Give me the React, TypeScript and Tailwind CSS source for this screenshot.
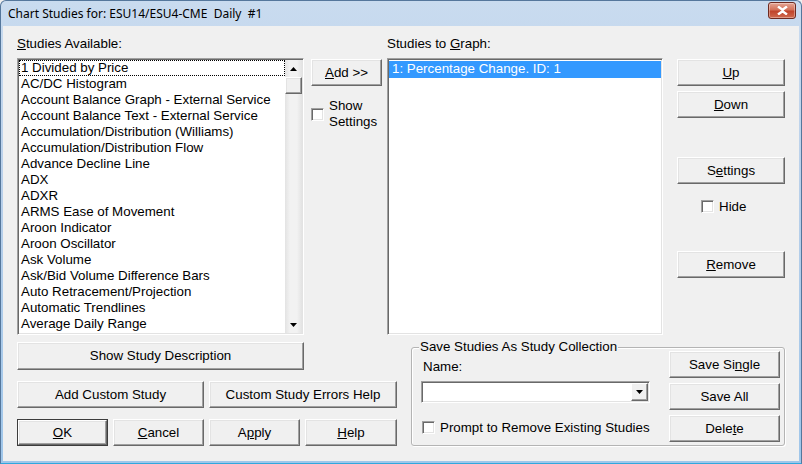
import type { ReactNode } from 'react'

const STUDIES = [
  '1 Divided by Price',
  'AC/DC Histogram',
  'Account Balance Graph - External Service',
  'Account Balance Text - External Service',
  'Accumulation/Distribution (Williams)',
  'Accumulation/Distribution Flow',
  'Advance Decline Line',
  'ADX',
  'ADXR',
  'ARMS Ease of Movement',
  'Aroon Indicator',
  'Aroon Oscillator',
  'Ask Volume',
  'Ask/Bid Volume Difference Bars',
  'Auto Retracement/Projection',
  'Automatic Trendlines',
  'Average Daily Range',
  'Average True Range',
]

/** classic raised 3D push button */
function Btn({
  children,
  className = '',
  isDefault = false,
}: {
  children: ReactNode
  className?: string
  isDefault?: boolean
}) {
  if (isDefault) {
    return (
      <div className={`border border-[#3c3c3c] ${className}`}>
        <Btn className="h-full w-full">{children}</Btn>
      </div>
    )
  }
  return (
    <button
      type="button"
      className={`flex shrink-0 items-center justify-center border border-t-white border-l-white border-r-[#696969] border-b-[#696969] bg-[#f0f0f0] text-[13.33px] leading-4 text-black shadow-[inset_-1px_-1px_0_#a0a0a0,inset_1px_1px_0_#e3e3e3] ${className}`}
    >
      {children}
    </button>
  )
}

function CheckBox() {
  return (
    <span className="block h-[13px] w-[13px] shrink-0 border border-t-[#a0a0a0] border-l-[#a0a0a0] border-r-white border-b-white bg-white shadow-[inset_1px_1px_0_#696969,inset_-1px_-1px_0_#e3e3e3]" />
  )
}

function Arrow({ down = false }: { down?: boolean }) {
  return (
    <svg width="7" height="4" viewBox="0 0 7 4" className="block">
      {down ? <path d="M0 0h7L3.5 4z" fill="#000" /> : <path d="M0 4h7L3.5 0z" fill="#000" />}
    </svg>
  )
}

function ScrollBar() {
  return (
    <div className="flex w-[17px] shrink-0 flex-col bg-[linear-gradient(to_right,#e3e3e3,#f2f2f2_30%,#f2f2f2_70%,#e3e3e3)]">
      <div className="flex h-[17px] items-center justify-center">
        <Arrow />
      </div>
      <div className="h-[17px] border border-t-white border-l-white border-r-[#696969] border-b-[#696969] bg-[#f0f0f0] shadow-[inset_-1px_-1px_0_#a0a0a0,inset_1px_1px_0_#e3e3e3]" />
      <div className="flex-1" />
      <div className="flex h-[17px] items-center justify-center">
        <Arrow down />
      </div>
    </div>
  )
}

export default function App() {
  return (
    <div className="h-[464px] w-[802px] overflow-hidden bg-[#f0f0f0] font-['Liberation_Sans',Arial,sans-serif] text-[13.33px] text-black">
      <div className="flex h-full flex-col rounded-t-[6px] border border-[#55779c] border-b-[#2fa8de] bg-[linear-gradient(to_bottom,#c9dbef,#b9d0ea_40%,#9fc6ea_100%)]">
        {/* title bar */}
        <div className="flex h-[25px] shrink-0 items-center pr-[5px] pl-[7px]">
          <span className="flex-1 whitespace-pre font-['Segoe_UI','Noto_Sans',sans-serif] text-[12px] text-black">
            Chart Studies for: ESU14/ESU4-CME  Daily  #1
          </span>
          <div className="mt-[-6px] flex h-[17px] w-[28px] items-center justify-center rounded-[3px] border border-[#6e2a20] bg-[linear-gradient(to_bottom,#e5a695,#d37159_45%,#c0442b_55%,#d06a4e)] shadow-[inset_0_0_0_1px_rgba(255,255,255,0.35)]">
            <svg width="11" height="9" viewBox="0 0 11 9">
              <path d="M1 0.5l4.5 3.2 4.5-3.2M1 8.5l4.5-3.2 4.5 3.2" stroke="#fff" strokeWidth="2.4" fill="none" />
            </svg>
          </div>
        </div>

        {/* client area */}
        <div className="mx-[2px] mb-[2px] flex flex-1 flex-col bg-[#f0f0f0]">
          <div className="flex pt-[10px] pl-[14px]">
            {/* studies available */}
            <div className="flex w-[287px] flex-col">
              <div className="h-[22px] leading-4">
                <u>S</u>tudies Available:
              </div>
              <div className="flex h-[277px] border border-t-[#a0a0a0] border-l-[#a0a0a0] border-r-white border-b-white bg-white p-px shadow-[inset_1px_1px_0_#696969,inset_-1px_-1px_0_#e3e3e3]">
                <div className="flex-1 overflow-hidden">
                  {STUDIES.map((s, i) => (
                    <div
                      key={s}
                      className={`h-4 truncate pl-[2px] leading-4 ${i === 0 ? 'outline outline-1 -outline-offset-1 outline-dotted outline-black' : ''}`}
                    >
                      {s}
                    </div>
                  ))}
                </div>
                <ScrollBar />
              </div>
            </div>

            {/* add column */}
            <div className="ml-[7px] flex w-[71px] flex-col pt-[23px]">
              <Btn className="h-[27px] w-[71px]">
                <span>
                  <u>A</u>dd &gt;&gt;
                </span>
              </Btn>
              <div className="mt-[12px] flex items-center gap-[5px]">
                <CheckBox />
                <div className="leading-4">
                  Show
                  <br />
                  Settings
                </div>
              </div>
            </div>

            {/* studies to graph */}
            <div className="ml-[5px] flex w-[276px] flex-col">
              <div className="h-[22px] leading-4">
                Studies to <u>G</u>raph:
              </div>
              <div className="h-[277px] border border-t-[#a0a0a0] border-l-[#a0a0a0] border-r-white border-b-white bg-white p-px shadow-[inset_1px_1px_0_#696969,inset_-1px_-1px_0_#e3e3e3]">
                <div className="mt-px h-[17px] bg-[#3399ff] pl-[3px] leading-4 text-white">1: Percentage Change. ID: 1</div>
              </div>
            </div>

            {/* right buttons */}
            <div className="ml-[14px] flex w-[108px] flex-col pt-[23px]">
              <Btn className="h-[27px] w-full">
                <span>
                  <u>U</u>p
                </span>
              </Btn>
              <Btn className="mt-[5px] h-[27px] w-full">
                <span>
                  <u>D</u>own
                </span>
              </Btn>
              <Btn className="mt-[39px] h-[27px] w-full">
                <span>
                  S<u>e</u>ttings
                </span>
              </Btn>
              <div className="mt-[16px] ml-[24px] flex h-[13px] items-center gap-[5px]">
                <CheckBox />
                <span className="leading-4">Hide</span>
              </div>
              <Btn className="mt-[38px] h-[27px] w-full">
                <span>
                  <u>R</u>emove
                </span>
              </Btn>
            </div>
          </div>

          {/* bottom section */}
          <div className="mt-[7px] flex pl-[14px]">
            <div className="flex w-[380px] flex-col">
              <Btn className="h-[28px] w-[287px]">Show Study Description</Btn>
              <div className="mt-[11px] flex gap-[5px]">
                <Btn className="h-[27px] w-[187px]">Add Custom Study</Btn>
                <Btn className="h-[27px] w-[188px]">Custom Study Errors Help</Btn>
              </div>
              <div className="mt-[11px] flex gap-[5px]">
                <Btn isDefault className="h-[27px] w-[91px]">
                  <span>
                    <u>O</u>K
                  </span>
                </Btn>
                <Btn className="h-[27px] w-[91px]">
                  <span>
                    <u>C</u>ancel
                  </span>
                </Btn>
                <Btn className="h-[27px] w-[91px]">
                  <span>
                    A<u>p</u>ply
                  </span>
                </Btn>
                <Btn className="h-[27px] w-[92px]">
                  <span>
                    <u>H</u>elp
                  </span>
                </Btn>
              </div>
            </div>

            {/* group box */}
            <div className="relative mt-[5px] ml-[14px] flex h-[99px] w-[374px] rounded-[3px] border border-[#b4b4b4] shadow-[inset_1px_1px_0_#fff,1px_1px_0_#fff]">
              <span className="absolute top-[-9px] left-[7px] bg-[#f0f0f0] px-px leading-4">Save Studies As Study Collection</span>
              <div className="flex w-[248px] flex-col pt-[11px] pl-[9px]">
                <div className="pl-[2px] leading-4">Name:</div>
                <div className="mt-[6px] flex h-[22px] w-[229px] items-center justify-end border border-t-[#a0a0a0] border-l-[#a0a0a0] border-r-white border-b-white bg-white pr-px shadow-[inset_1px_1px_0_#696969,inset_-1px_-1px_0_#e3e3e3]">
                  <div className="flex h-[18px] w-[17px] items-center justify-center border border-t-white border-l-white border-r-[#696969] border-b-[#696969] bg-[#f0f0f0] shadow-[inset_-1px_-1px_0_#a0a0a0]">
                    <svg width="7" height="4" viewBox="0 0 7 4">
                      <path d="M0 0h7L3.5 4z" fill="#000" />
                    </svg>
                  </div>
                </div>
                <div className="mt-[18px] flex h-[13px] items-center gap-[5px] pl-px">
                  <CheckBox />
                  <span className="leading-4">Prompt to Remove Existing Studies</span>
                </div>
              </div>
              <div className="ml-[9px] flex w-[111px] flex-col gap-[5px] pt-[3px]">
                <Btn className="h-[27px] w-full">
                  <span>
                    Save Si<u>n</u>gle
                  </span>
                </Btn>
                <Btn className="h-[27px] w-full">Save All</Btn>
                <Btn className="h-[27px] w-full">
                  <span>
                    Dele<u>t</u>e
                  </span>
                </Btn>
              </div>
            </div>
          </div>
        </div>
      </div>
    </div>
  )
}
